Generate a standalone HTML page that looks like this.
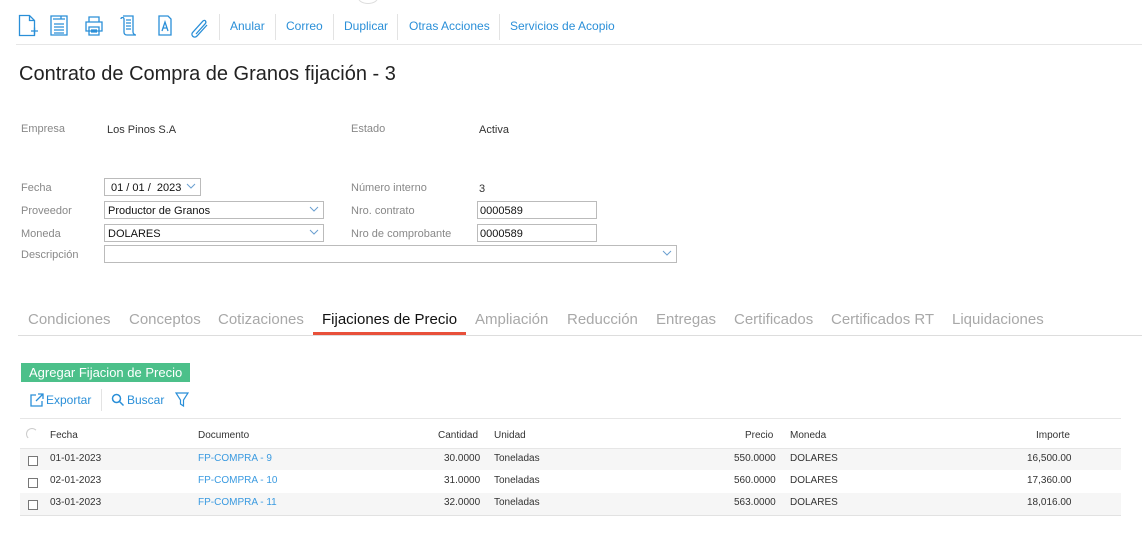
<!DOCTYPE html>
<html><head><meta charset="utf-8"><style>
*{margin:0;padding:0;box-sizing:border-box}
body{width:1142px;height:552px;background:#fff;font-family:"Liberation Sans",sans-serif;position:relative;overflow:hidden;color:#333}
.a{position:absolute;white-space:nowrap}
.tb{font-size:12px;color:#2a8fd8;top:19px}
.sep{position:absolute;top:14px;width:1px;height:26px;background:#e3e3e3}
.lbl{font-size:11px;color:#888;margin-top:1px}
.val{font-size:11px;color:#333;margin-top:1px}
.inp{position:absolute;border:1px solid #bbb;height:18px;font-size:11px;color:#111;padding:3px 3px 0;background:#fff;margin-top:1px}
.chev{position:absolute;right:4px;top:3px;width:10px;height:8px}
.tab{font-size:15px;color:#a8a8a8;top:311px}
.th{font-size:10px;color:#333;margin-top:1px}
.td{font-size:10px;color:#333;margin-top:1px}
.lnk{color:#3a9ae0}
.cb{position:absolute;width:10px;height:10px;border:1px solid #777;left:28px;background:#fff}
</style></head><body>
<svg class="a" style="left:18px;top:14px" width="200" height="24" viewBox="0 0 200 24" fill="none" stroke="#2a8fd8" stroke-width="1.3">
<path d="M1.5 1.5h10l5 5v15h-15z M11.5 1.5v5h5"/><path d="M13 17h7M16.5 13.5v7" />
<path d="M33 2h16v19h-16z M35 5h12M36 10h10M36 13h10M36 16h10M36 19h10M43 2v3"/>
<path d="M71 3h10v5h-10z M68 8h16v9h-16z M71 13h10v8h-10z M73 16h6M73 18h6"/>
<path d="M105 2h10v16c0 2 2 3 3 3h-9c-2 0-3-1-3-3V5c0-2-3-2-3 0 M108 6h5M108 9h5M108 12h5M108 15h5"/>
<path d="M141 2h9l3 3v16h-12z M144 17l3-9 3 9M145 14h4"/>
<path d="M178 20l9-10c2-2 0-5-2-3l-10 11c-3 3 1 7 4 4l10-11"/>
</svg>
<div class="sep" style="left:219px"></div>
<div class="a tb" style="left:230px">Anular</div>
<div class="sep" style="left:275px"></div>
<div class="a tb" style="left:286px">Correo</div>
<div class="sep" style="left:333px"></div>
<div class="a tb" style="left:344px">Duplicar</div>
<div class="sep" style="left:397px"></div>
<div class="a tb" style="left:409px">Otras Acciones</div>
<div class="sep" style="left:499px"></div>
<div class="a tb" style="left:510px">Servicios de Acopio</div>
<div class="a" style="left:16px;top:44px;width:1126px;height:1px;background:#e6e6e6"></div>
<div class="a" style="left:358px;top:-8px;width:20px;height:12px;border-radius:50%;border:1px solid #ddd"></div>

<div class="a" style="left:19px;top:63px;font-size:20px;color:#222">Contrato de Compra de Granos fijación - 3</div>

<div class="a lbl" style="left:21px;top:122px">Empresa</div>
<div class="a val" style="left:107px;top:123px">Los Pinos S.A</div>
<div class="a lbl" style="left:351px;top:122px">Estado</div>
<div class="a val" style="left:479px;top:123px">Activa</div>

<div class="a lbl" style="left:21px;top:181px">Fecha</div>
<div class="inp" style="left:104px;top:177px;width:97px;padding-left:6px">01 / 01 /&nbsp; 2023<svg class="chev" viewBox="0 0 10 8"><path d="M1 2l4 4 4-4" stroke="#6a9fd0" fill="none"/></svg></div>
<div class="a lbl" style="left:21px;top:204px">Proveedor</div>
<div class="inp" style="left:104px;top:200px;width:220px">Productor de Granos<svg class="chev" viewBox="0 0 10 8"><path d="M1 2l4 4 4-4" stroke="#6a9fd0" fill="none"/></svg></div>
<div class="a lbl" style="left:21px;top:227px">Moneda</div>
<div class="inp" style="left:104px;top:223px;width:220px">DOLARES<svg class="chev" viewBox="0 0 10 8"><path d="M1 2l4 4 4-4" stroke="#6a9fd0" fill="none"/></svg></div>
<div class="a lbl" style="left:21px;top:248px">Descripción</div>
<div class="inp" style="left:104px;top:244px;width:573px"><svg class="chev" viewBox="0 0 10 8"><path d="M1 2l4 4 4-4" stroke="#6a9fd0" fill="none"/></svg></div>

<div class="a lbl" style="left:351px;top:181px">Número interno</div>
<div class="a val" style="left:479px;top:182px">3</div>
<div class="a lbl" style="left:351px;top:204px">Nro. contrato</div>
<div class="inp" style="left:477px;top:200px;width:120px;padding-left:2px">0000589</div>
<div class="a lbl" style="left:351px;top:227px">Nro de comprobante</div>
<div class="inp" style="left:477px;top:223px;width:120px;padding-left:2px">0000589</div>

<div class="a tab" style="left:28px">Condiciones</div>
<div class="a tab" style="left:129px">Conceptos</div>
<div class="a tab" style="left:218px">Cotizaciones</div>
<div class="a tab" style="left:322px;color:#111">Fijaciones de Precio</div>
<div class="a tab" style="left:475px">Ampliación</div>
<div class="a tab" style="left:567px">Reducción</div>
<div class="a tab" style="left:656px">Entregas</div>
<div class="a tab" style="left:734px">Certificados</div>
<div class="a tab" style="left:831px">Certificados RT</div>
<div class="a tab" style="left:952px">Liquidaciones</div>
<div class="a" style="left:18px;top:335px;width:1124px;height:1px;background:#ddd"></div>
<div class="a" style="left:313px;top:332px;width:153px;height:3px;background:#e8503a"></div>

<div class="a" style="left:21px;top:363px;width:169px;height:19px;background:#4cc08a;color:#fff;font-size:13px;padding:2px 0 0 8px">Agregar Fijacion de Precio</div>
<svg class="a" style="left:30px;top:393px" width="14" height="14" viewBox="0 0 14 14" fill="none" stroke="#2a8fd8" stroke-width="1.3"><path d="M6 2H1v11h11V8M8 1h5v5M13 1L6 8"/></svg>
<div class="a" style="left:46px;top:393px;font-size:12px;color:#2a8fd8">Exportar</div>
<div class="a" style="left:101px;top:389px;width:1px;height:22px;background:#e3e3e3"></div>
<svg class="a" style="left:111px;top:393px" width="14" height="14" viewBox="0 0 14 14" fill="none" stroke="#2a8fd8" stroke-width="1.5"><circle cx="5.5" cy="5.5" r="4"/><path d="M8.5 8.5l4 4"/></svg>
<div class="a" style="left:127px;top:393px;font-size:12px;color:#2a8fd8">Buscar</div>
<svg class="a" style="left:175px;top:392px" width="14" height="16" viewBox="0 0 14 16" fill="none" stroke="#2a8fd8" stroke-width="1.2"><path d="M1 1h12L8.5 8v6l-3-2V8z"/></svg>

<div class="a" style="left:20px;top:418px;width:1101px;height:1px;background:#e6e6e6"></div>
<div class="a" style="left:26px;top:428px;width:12px;height:12px;border-radius:50%;border:1px solid #ccc;border-right-color:transparent;border-bottom-color:transparent"></div>
<div class="a th" style="left:50px;top:429px">Fecha</div>
<div class="a th" style="left:198px;top:429px">Documento</div>
<div class="a th" style="left:438px;top:429px">Cantidad</div>
<div class="a th" style="left:494px;top:429px">Unidad</div>
<div class="a th" style="left:745px;top:429px">Precio</div>
<div class="a th" style="left:790px;top:429px">Moneda</div>
<div class="a th" style="left:1036px;top:429px">Importe</div>
<div class="a" style="left:20px;top:448px;width:1101px;height:1px;background:#e6e6e6"></div>
<div class="a" style="left:20px;top:449px;width:1101px;height:21px;background:#f6f6f6"></div>
<div class="a" style="left:20px;top:493px;width:1101px;height:22px;background:#f6f6f6"></div>
<div class="a" style="left:20px;top:515px;width:1101px;height:1px;background:#e2e2e2"></div>

<div class="cb" style="top:456px"></div>
<div class="a td" style="left:50px;top:452px">01-01-2023</div>
<div class="a td lnk" style="left:198px;top:452px">FP-COMPRA - 9</div>
<div class="a td" style="left:444px;top:452px">30.0000</div>
<div class="a td" style="left:494px;top:452px">Toneladas</div>
<div class="a td" style="left:734px;top:452px">550.0000</div>
<div class="a td" style="left:790px;top:452px">DOLARES</div>
<div class="a td" style="left:1027px;top:452px">16,500.00</div>

<div class="cb" style="top:478px"></div>
<div class="a td" style="left:50px;top:474px">02-01-2023</div>
<div class="a td lnk" style="left:198px;top:474px">FP-COMPRA - 10</div>
<div class="a td" style="left:444px;top:474px">31.0000</div>
<div class="a td" style="left:494px;top:474px">Toneladas</div>
<div class="a td" style="left:734px;top:474px">560.0000</div>
<div class="a td" style="left:790px;top:474px">DOLARES</div>
<div class="a td" style="left:1027px;top:474px">17,360.00</div>

<div class="cb" style="top:500px"></div>
<div class="a td" style="left:50px;top:496px">03-01-2023</div>
<div class="a td lnk" style="left:198px;top:496px">FP-COMPRA - 11</div>
<div class="a td" style="left:444px;top:496px">32.0000</div>
<div class="a td" style="left:494px;top:496px">Toneladas</div>
<div class="a td" style="left:734px;top:496px">563.0000</div>
<div class="a td" style="left:790px;top:496px">DOLARES</div>
<div class="a td" style="left:1027px;top:496px">18,016.00</div>
</body></html>
